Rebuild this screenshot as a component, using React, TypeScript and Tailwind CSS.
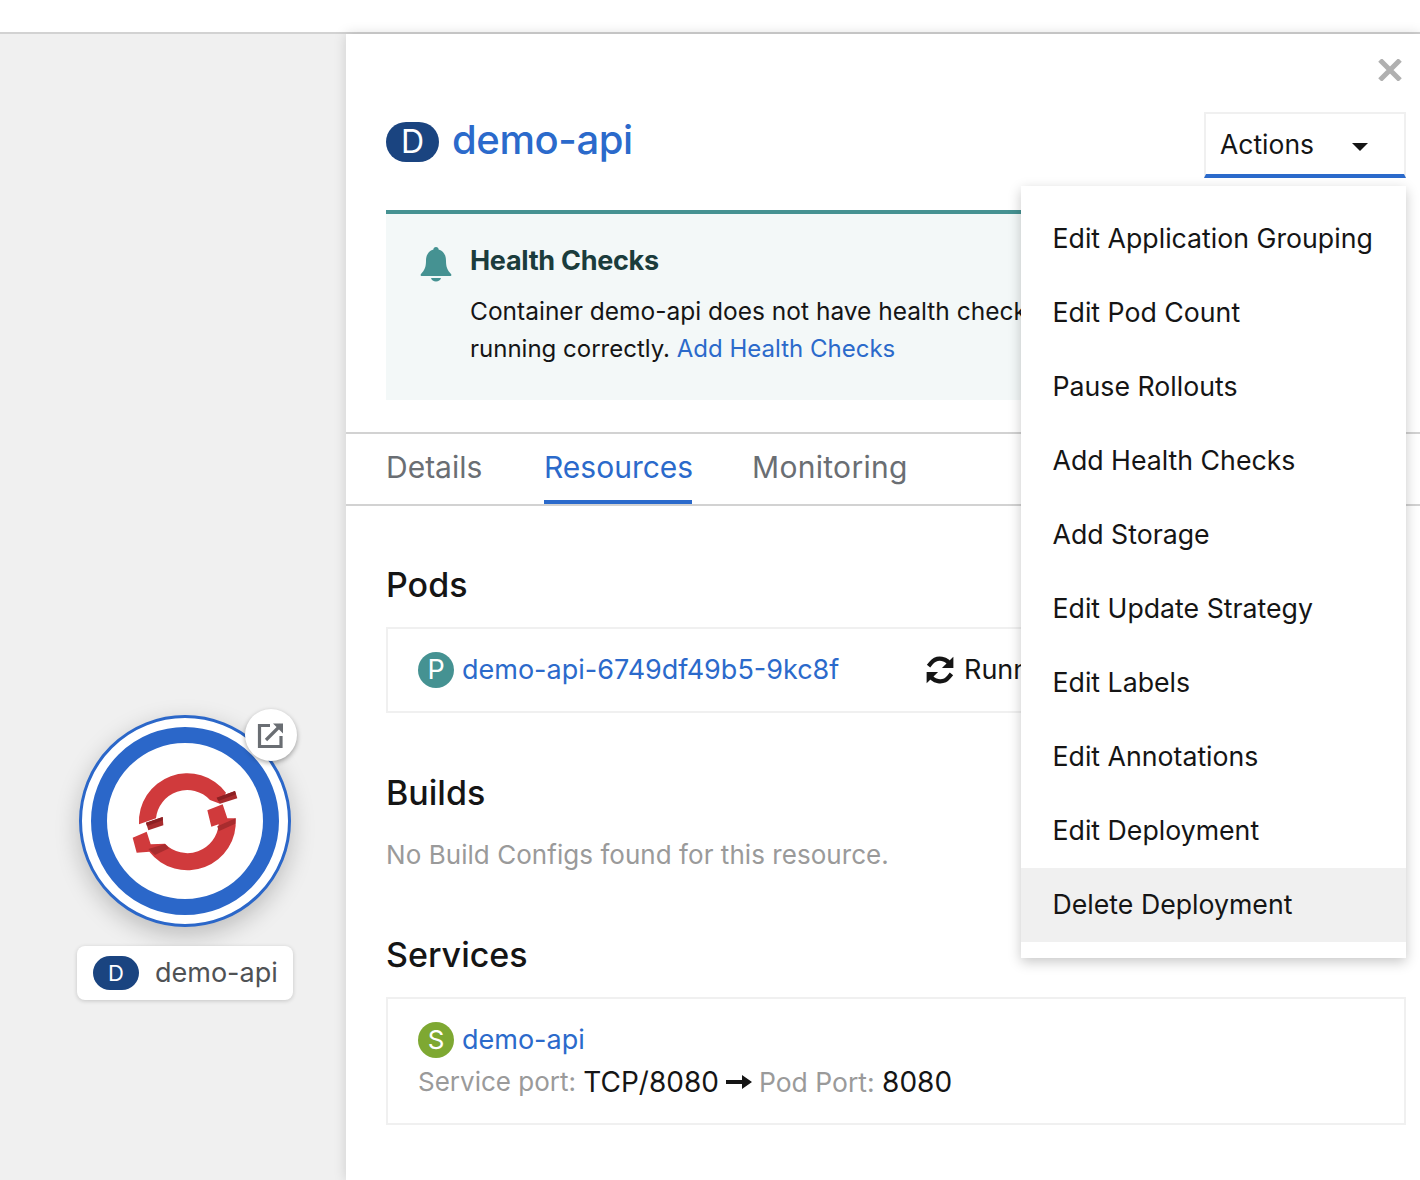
import React from 'react'

const menuItems = [
  'Edit Application Grouping',
  'Edit Pod Count',
  'Pause Rollouts',
  'Add Health Checks',
  'Add Storage',
  'Edit Update Strategy',
  'Edit Labels',
  'Edit Annotations',
  'Edit Deployment',
  'Delete Deployment'
]

function Badge({ letter, className }: { letter: string; className: string }) {
  return (
    <span className={`flex shrink-0 items-center justify-center rounded-full text-white ${className}`}>
      {letter}
    </span>
  )
}

function OpenShiftLogo() {
  return (
    <svg width="130" height="120" viewBox="0 0 390 360">
      <path
        d="M57 190A145 145 0 0 1 318 95L300 128L270 117A94 94 0 0 0 108 172Z"
        fill="#d03a3c"
      />
      <path
        d="M262 148L308 130L322 172L347 172A145 145 0 0 1 88 272L50 275L38 230L80 212L92 250L135 248A94 94 0 0 0 296 190L274 197Z"
        fill="#d03a3c"
      />
      <path d="M78 185L128 168L130 193L85 208Z" fill="#a82c2e" />
      <path d="M78 185L128 168L129 178L81 195Z" fill="#8c2023" />
      <path d="M85 264L135 249L147 262L105 282Z" fill="#a82c2e" />
      <path d="M292 196L347 172L346 188L296 211Z" fill="#a82c2e" />
      <path d="M290 110L345 90L352 112L300 128Z" fill="#a82c2e" />
      <path d="M290 110L345 90L348 100L295 120Z" fill="#8c2023" />
    </svg>
  )
}

function Topology() {
  return (
    <div className="relative w-[346px] shrink-0 bg-[#f0f0f0]">
      {/* node on the canvas */}
      <div className="absolute left-[79px] top-[681px] flex h-[212px] w-[212px] items-center justify-center rounded-full border-[3px] border-[#2b67c9] bg-white shadow-[0_8px_24px_rgba(0,0,0,0.22)]">
        <div className="flex h-[188px] w-[188px] items-center justify-center rounded-full border-[16px] border-[#2b67c9] bg-white">
          <OpenShiftLogo />
        </div>
      </div>
      <div className="absolute left-[245px] top-[675px] flex h-[52px] w-[52px] items-center justify-center rounded-full bg-white shadow-[0_2px_5px_rgba(0,0,0,0.35)]">
        <svg width="28" height="28" viewBox="0 0 28 28" fill="none" stroke="#6a6e73" strokeWidth="3.2">
          <path d="M13 4.500H2.500V25.500H24V15" />
          <path d="M9 19L24 4" />
          <path d="M16 2.500H26V12.500Z" fill="#6a6e73" stroke="none" />
        </svg>
      </div>
      <div className="absolute left-[77px] top-[912px] flex h-[54px] w-[216px] items-center gap-4 rounded-lg bg-white pl-4 text-[27px] text-[#4f5255] shadow-[0_1px_4px_rgba(0,0,0,0.18)]">
        <Badge letter="D" className="h-[34px] w-[46px] bg-[#1a4480] text-[22px]" />
        <span className="pt-px">demo-api</span>
      </div>
    </div>
  )
}

function Tabs() {
  return (
    <div className="mt-8 flex h-[74px] gap-[60px] border-y-2 border-[#d2d2d2] pl-10 text-[30px] text-[#6a6e73]">
      <span className="flex w-[98px] items-center pb-1">Details</span>
      <span className="flex w-[148px] items-center border-b-4 border-[#2b6acb] whitespace-nowrap text-[#2b6acb]">Resources</span>
      <span className="flex items-center pb-1 tracking-[0.3px]">Monitoring</span>
    </div>
  )
}

function ActionsMenu() {
  return (
    <div className="absolute left-[675px] top-[152px] w-[385px] bg-white py-4 text-[26.700px] text-[#151515] shadow-[0_4px_12px_rgba(0,0,0,0.22)]">
      {menuItems.map((item) => (
        <div
          key={item}
          className={`flex h-[74px] items-center pb-[2px] pl-[31.500px] ${item === 'Delete Deployment' ? 'bg-[#f0f0f0]' : ''}`}
        >
          {item}
        </div>
      ))}
    </div>
  )
}

function DetailsPanel() {
  return (
    <div className="relative flex-1 overflow-hidden bg-white shadow-[0_0_12px_rgba(0,0,0,0.15)]">
      <svg className="absolute left-[1032px] top-[25px]" width="24" height="22" viewBox="0 0 24 22" fill="none" stroke="#b0b0b0" strokeWidth="5">
        <path d="M2 1L22 21M22 1L2 21" />
      </svg>

      <div className="flex items-start justify-between pl-10 pr-[14px] pt-[78px]">
        <div className="mt-[10px] flex items-start gap-[13px]">
          <Badge letter="D" className="h-10 w-[53px] bg-[#1a4480] text-[32px]" />
          <span className="-mt-[2px] text-[40px] leading-[40px] font-medium tracking-[-0.4px] text-[#2b6acb]">demo-api</span>
        </div>
        <div className="flex h-[66px] w-[202px] items-center justify-between border-x-2 border-t-2 border-b-4 border-[#f0f0f0] border-b-[#2b6acb] pl-[14px] pr-9 text-[26.500px] text-[#151515]">
          <span className="pt-[2px]">Actions</span>
          <span className="mt-[6px] h-0 w-0 border-x-8 border-t-8 border-x-transparent border-t-[#151515]" />
        </div>
      </div>

      <div className="mt-8 ml-10 mr-[14px] h-[190px] border-t-4 border-[#459292] bg-[#f3f8f8] pl-[34px]">
        <div className="flex">
          <svg className="mt-[32px] shrink-0" width="32" height="36" viewBox="0 0 32 36" fill="#459292">
            <path d="M16 1c1.600 0 2.600 1 2.600 2.400C24 5 26 9.500 26 15c0 6 1.400 9 5 13 .800 1 .300 2-1 2H2c-1.300 0-1.800-1-1-2 3.600-4 5-7 5-13 0-5.500 2-10 7.400-11.600C13.400 2 14.400 1 16 1Z" />
            <path d="M11 32h10c-.500 2.300-2.500 3.500-5 3.500S11.500 34.300 11 32Z" />
          </svg>
          <div className="ml-[18px] whitespace-nowrap text-[24.500px] leading-[38px] text-[#151515]">
            <div className="mt-[28px] mb-[12px] text-[27px] font-bold tracking-[-0.3px] text-[#1b3c3c]">Health Checks</div>
            <div>Container demo-api does not have health check</div>
            <div className="text-[24px]">
              running correctly. <span className="text-[#2b6acb]">Add Health Checks</span>
            </div>
          </div>
        </div>
      </div>

      <Tabs />

      <div className="pl-10 pr-[14px]">
        <h2 className="mt-[57px] text-[34px] leading-[44px] font-medium text-[#151515]">Pods</h2>
        <div className="mt-5 flex h-[86px] items-center border-2 border-[#f0f0f0] pl-[30px] text-[27px]">
          <Badge letter="P" className="h-9 w-9 bg-[#459292]" />
          <span className="ml-2 w-[464px] text-[#2b6acb]">demo-api-6749df49b5-9kc8f</span>
          <svg width="28" height="28" viewBox="1 1 22 22" fill="none" stroke="#151515" strokeWidth="3.400">
            <path d="M20.500 9A9 9 0 0 0 5 6.500L3 9M3.500 15A9 9 0 0 0 19 17.500L21 15" />
            <path d="M22.500 1.500V10.500H13.500Z" fill="#151515" stroke="none" />
            <path d="M1.500 22.500V13.500H10.500Z" fill="#151515" stroke="none" />
          </svg>
          <span className="ml-[10px] whitespace-nowrap text-[#151515]">Runn</span>
        </div>

        <h2 className="mt-[58px] text-[34px] leading-[44px] font-medium text-[#151515]">Builds</h2>
        <p className="mt-[21px] text-[26px] leading-[38px] tracking-[0.05px] text-[#9a9a9a]">No Build Configs found for this resource.</p>

        <h2 className="mt-[59px] text-[34px] leading-[44px] font-medium text-[#151515]">Services</h2>
        <div className="mt-5 h-[128px] border-2 border-[#f0f0f0] pl-[30px] pt-[22px] text-[26px] leading-[38px]">
          <div className="flex items-center">
            <Badge letter="S" className="h-9 w-9 bg-[#7ea832]" />
            <span className="ml-2 text-[27px] text-[#2b6acb]">demo-api</span>
          </div>
          <div className="mt-[4px] flex items-center whitespace-pre text-[#151515]">
            <span className="text-[#9a9a9a]">Service port: </span>
            <span className="text-[28px]">TCP/8080</span>
            <svg className="mx-[7px]" width="26" height="14" viewBox="0 0 26 14" fill="#151515">
              <path d="M0 5H16V0L26 7L16 14V9H0Z" />
            </svg>
            <span className="text-[26.500px] text-[#9a9a9a]">Pod Port: </span>
            <span className="text-[28px]">8080</span>
          </div>
        </div>
      </div>

      <ActionsMenu />
    </div>
  )
}

export default function App() {
  return (
    <div className="flex h-[1180px] w-[1420px] flex-col overflow-hidden bg-white font-['Inter','Noto_Sans',sans-serif]">
      <div className="h-[34px] shrink-0 border-b-2 border-[#d2d2d2] bg-white" />
      <div className="flex flex-1">
        <Topology />
        <DetailsPanel />
      </div>
    </div>
  )
}
